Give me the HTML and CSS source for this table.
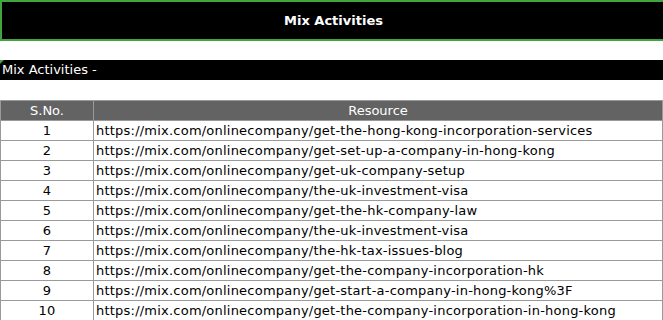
FILE: index.html
```html
<!DOCTYPE html>
<html>
<head>
<meta charset="utf-8">
<link rel="stylesheet" href="styles.css">
</head>
<body>
<div class="header">Mix Activities</div>
<div class="bar"><span class="corner"></span>Mix Activities -</div>
<table class="list">
<thead>
<tr><th class="num">S.No.</th><th>Resource</th></tr>
</thead>
<tbody>
<tr><td class="num">1</td><td>https://mix.com/onlinecompany/get-the-hong-kong-incorporation-services</td></tr>
<tr><td class="num">2</td><td>https://mix.com/onlinecompany/get-set-up-a-company-in-hong-kong</td></tr>
<tr><td class="num">3</td><td>https://mix.com/onlinecompany/get-uk-company-setup</td></tr>
<tr><td class="num">4</td><td>https://mix.com/onlinecompany/the-uk-investment-visa</td></tr>
<tr><td class="num">5</td><td>https://mix.com/onlinecompany/get-the-hk-company-law</td></tr>
<tr><td class="num">6</td><td>https://mix.com/onlinecompany/the-uk-investment-visa</td></tr>
<tr><td class="num">7</td><td>https://mix.com/onlinecompany/the-hk-tax-issues-blog</td></tr>
<tr><td class="num">8</td><td>https://mix.com/onlinecompany/get-the-company-incorporation-hk</td></tr>
<tr><td class="num">9</td><td>https://mix.com/onlinecompany/get-start-a-company-in-hong-kong%3F</td></tr>
<tr><td class="num">10</td><td>https://mix.com/onlinecompany/get-the-company-incorporation-in-hong-kong</td></tr>
</tbody>
</table>
</body>
</html>
```
FILE: styles.css
```css
html, body {
  margin: 0;
  padding: 0;
  background: #fff;
  overflow: hidden;
}
body {
  font-family: "DejaVu Sans", Verdana, sans-serif;
  font-size: 12px;
  color: #000;
}
.header {
  box-sizing: border-box;
  height: 41px;
  margin-right: -4px;
  border: 2px solid #43a33f;
  background: #000;
  color: #fff;
  font-weight: bold;
  font-size: 13px;
  display: flex;
  align-items: center;
  justify-content: center;
}
.bar {
  position: relative;
  margin-top: 19px;
  height: 20px;
  line-height: 20px;
  background: #000;
  color: #fff;
  font-size: 13px;
  padding-left: 2px;
}
.corner {
  position: absolute;
  left: 0;
  top: 0;
  width: 0;
  height: 0;
  border-top: 4px solid #43a33f;
  border-right: 4px solid transparent;
}
.list {
  margin-top: 20px;
  width: 100%;
  border-collapse: collapse;
}
.list th, .list td {
  border: 1px solid #9a9a9a;
  height: 19px;
  padding: 0 2px;
  line-height: 18px;
  white-space: nowrap;
  font-size: 13px;
}
.list th {
  background: #636363;
  color: #fff;
  font-weight: normal;
  text-align: center;
}
.list td {
  text-align: left;
  letter-spacing: 0.22px;
}
.list .num {
  width: 88px;
  text-align: center;
}
```
